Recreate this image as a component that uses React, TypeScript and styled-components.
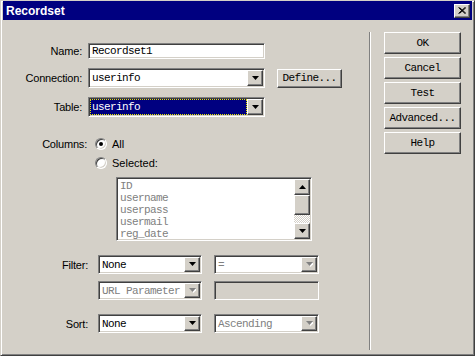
import styled, { createGlobalStyle } from 'styled-components';

const GlobalStyle = createGlobalStyle`
  html, body { margin: 0; padding: 0; background: #d4d0c8; }
  body { font-family: "Liberation Sans", Arial, sans-serif; }
`;

const mono = `"Liberation Mono", "Courier New", monospace`;

const Window = styled.div`
  box-sizing: border-box;
  width: 475px;
  height: 356px;
  background: #d4d0c8;
  border: 1px solid;
  border-color: #d4d0c8 #404040 #404040 #d4d0c8;
  box-shadow: inset 1px 1px #fff, inset -1px -1px #808080;
  padding: 0 2px 2px 2px;
  display: flex;
  flex-direction: column;
`;

const TitleBar = styled.div`
  height: 19px;
  flex: none;
  background: #000080;
  display: flex;
  align-items: center;
  justify-content: space-between;
  padding: 0 2px 0 3px;
`;

const TitleText = styled.span`
  color: #fff;
  font-size: 12px;
  font-weight: bold;
`;

const CloseButton = styled.div`
  box-sizing: border-box;
  width: 16px;
  height: 14px;
  background: #d4d0c8;
  border: 1px solid;
  border-color: #fff #404040 #404040 #fff;
  box-shadow: inset -1px -1px #808080;
  display: flex;
  align-items: center;
  justify-content: center;
`;

const Body = styled.div`
  flex: 1;
  display: flex;
`;

const LeftPane = styled.div`
  width: 366px;
  flex: none;
  display: flex;
  flex-direction: column;
`;

const Separator = styled.div`
  width: 2px;
  box-sizing: border-box;
  border-left: 1px solid #808080;
  border-right: 1px solid #fff;
  margin: 12px 0 3px 0;
`;

const RightPane = styled.div`
  display: flex;
  flex-direction: column;
  gap: 3px;
  padding: 12px 0 0 13px;
`;

const Row = styled.div<{ $top: number; $h: number }>`
  display: flex;
  align-items: center;
  margin-top: ${p => p.$top}px;
  height: ${p => p.$h}px;
`;

const Label = styled.div<{ $w: number; $gap: number }>`
  width: ${p => p.$w}px;
  margin-right: ${p => p.$gap}px;
  flex: none;
  text-align: right;
  font-size: 11px;
  color: #000;
  letter-spacing: -0.2px;
`;

const Indent = styled.div<{ $w: number }>`
  width: ${p => p.$w}px;
  flex: none;
`;

const Sunken = styled.div<{ $w: number; $h: number; $bg?: string }>`
  box-sizing: border-box;
  width: ${p => p.$w}px;
  height: ${p => p.$h}px;
  flex: none;
  background: ${p => p.$bg ?? '#fff'};
  border: 1px solid;
  border-color: #808080 #fff #fff #808080;
  box-shadow: inset 1px 1px #404040, inset -1px -1px #d4d0c8;
  padding: 1px;
  display: flex;
`;

const FieldText = styled.div<{ $disabled?: boolean; $selected?: boolean }>`
  flex: 1;
  min-width: 0;
  display: flex;
  align-items: center;
  padding-left: 2px;
  font-family: ${mono};
  font-size: 11px;
  letter-spacing: -0.6px;
  white-space: nowrap;
  overflow: hidden;
  color: ${p => (p.$disabled ? '#808080' : p.$selected ? '#fff' : '#000')};
  background: ${p => (p.$selected ? '#000080' : 'transparent')};
  outline: ${p => (p.$selected ? '1px dotted #e8e800' : 'none')};
  outline-offset: -1px;
`;

const Raised = styled.div`
  box-sizing: border-box;
  background: #d4d0c8;
  border: 1px solid;
  border-color: #fff #404040 #404040 #fff;
  box-shadow: inset -1px -1px #808080;
  display: flex;
  align-items: center;
  justify-content: center;
  flex: none;
`;

const DropButton = styled(Raised)`
  width: 16px;
  height: 100%;
`;

const Button = styled(Raised)<{ $w: number; $h: number }>`
  width: ${p => p.$w}px;
  height: ${p => p.$h}px;
  font-family: ${mono};
  font-size: 11px;
  letter-spacing: -0.6px;
  color: #000;
  white-space: nowrap;
`;

const ListItems = styled.div`
  flex: 1;
  padding: 1px 2px;
  font-family: ${mono};
  font-size: 11px;
  letter-spacing: -0.6px;
  line-height: 12px;
  color: #808080;
`;

const ScrollBar = styled.div`
  width: 16px;
  display: flex;
  flex-direction: column;
`;

const ScrollButton = styled(Raised)`
  width: 16px;
  height: 16px;
`;

const Thumb = styled(Raised)`
  width: 16px;
  height: 20px;
`;

const Track = styled.div`
  flex: 1;
  background-image: repeating-conic-gradient(#fff 0 25%, #d4d0c8 0 50%);
  background-size: 2px 2px;
`;

const Radio = styled.div<{ $checked?: boolean }>`
  box-sizing: border-box;
  width: 12px;
  height: 12px;
  flex: none;
  border-radius: 50%;
  background: #fff;
  border: 1px solid;
  border-color: #808080 #fff #fff #808080;
  box-shadow: inset 1px 1px #404040, inset -1px -1px #d4d0c8;
  display: flex;
  align-items: center;
  justify-content: center;
  margin-right: 5px;
  &::after {
    content: '';
    width: 4px;
    height: 4px;
    border-radius: 50%;
    background: ${p => (p.$checked ? '#000' : 'transparent')};
  }
`;

const RadioText = styled.span`
  font-size: 11px;
  color: #000;
`;

const Arrow = ({ up, disabled }: { up?: boolean; disabled?: boolean }) => (
  <svg width="7" height="5" viewBox="0 0 7 5">
    {disabled && (
      <polygon points={up ? '1,5 4,2 7,5' : '1,1 8,1 4.5,5'} fill="#fff" />
    )}
    <polygon
      points={up ? '0,4 3.5,0 7,4' : '0,0 7,0 3.5,4'}
      fill={disabled ? '#808080' : '#000'}
    />
  </svg>
);

const Combo = ({
  w,
  h,
  text,
  disabled,
  selected,
}: {
  w: number;
  h: number;
  text: string;
  disabled?: boolean;
  selected?: boolean;
}) => (
  <Sunken $w={w} $h={h}>
    <FieldText $disabled={disabled} $selected={selected}>{text}</FieldText>
    <DropButton>
      <Arrow disabled={disabled} />
    </DropButton>
  </Sunken>
);

const columns = ['ID', 'username', 'userpass', 'usermail', 'reg_date'];

export default function App() {
  return (
    <>
      <GlobalStyle />
      <Window>
        <TitleBar>
          <TitleText>Recordset</TitleText>
          <CloseButton>
            <svg width="8" height="7" viewBox="0 0 8 7">
              <path d="M0.5 0.5 L7 6.5 M1.5 0.5 L8 6.5 M7 0.5 L0.5 6.5 M8 0.5 L1.5 6.5" stroke="#000" strokeWidth="1" />
            </svg>
          </CloseButton>
        </TitleBar>
        <Body>
          <LeftPane>
            <Row $top={23} $h={16}>
              <Label $w={79} $gap={6}>Name:</Label>
              <Sunken $w={177} $h={16}>
                <FieldText>Recordset1</FieldText>
              </Sunken>
            </Row>
            <Row $top={9} $h={20}>
              <Label $w={79} $gap={6}>Connection:</Label>
              <Combo w={177} h={20} text="userinfo" />
              <Indent $w={12} />
              <Button $w={65} $h={19}>Define...</Button>
            </Row>
            <Row $top={9} $h={20}>
              <Label $w={79} $gap={6}>Table:</Label>
              <Combo w={177} h={20} text="userinfo" selected />
            </Row>
            <Row $top={20} $h={13}>
              <Label $w={84} $gap={8}>Columns:</Label>
              <Radio $checked />
              <RadioText>All</RadioText>
            </Row>
            <Row $top={6} $h={13}>
              <Indent $w={92} />
              <Radio />
              <RadioText>Selected:</RadioText>
            </Row>
            <Row $top={8} $h={64}>
              <Indent $w={113} />
              <Sunken $w={196} $h={64}>
                <ListItems>
                  {columns.map(c => (
                    <div key={c}>{c}</div>
                  ))}
                </ListItems>
                <ScrollBar>
                  <ScrollButton>
                    <Arrow up />
                  </ScrollButton>
                  <Thumb />
                  <Track />
                  <ScrollButton>
                    <Arrow />
                  </ScrollButton>
                </ScrollBar>
              </Sunken>
            </Row>
            <Row $top={14} $h={19}>
              <Label $w={85} $gap={10}>Filter:</Label>
              <Combo w={104} h={19} text="None" />
              <Indent $w={12} />
              <Combo w={105} h={19} text="=" disabled />
            </Row>
            <Row $top={7} $h={19}>
              <Indent $w={95} />
              <Combo w={104} h={19} text="URL Parameter" disabled />
              <Indent $w={12} />
              <Sunken $w={105} $h={19} $bg="#d4d0c8" />
            </Row>
            <Row $top={14} $h={19}>
              <Label $w={85} $gap={10}>Sort:</Label>
              <Combo w={104} h={19} text="None" />
              <Indent $w={12} />
              <Combo w={105} h={19} text="Ascending" disabled />
            </Row>
          </LeftPane>
          <Separator />
          <RightPane>
            <Button $w={77} $h={22}>OK</Button>
            <Button $w={77} $h={22}>Cancel</Button>
            <Button $w={77} $h={22}>Test</Button>
            <Button $w={77} $h={22}>Advanced...</Button>
            <Button $w={77} $h={22}>Help</Button>
          </RightPane>
        </Body>
      </Window>
    </>
  );
}
